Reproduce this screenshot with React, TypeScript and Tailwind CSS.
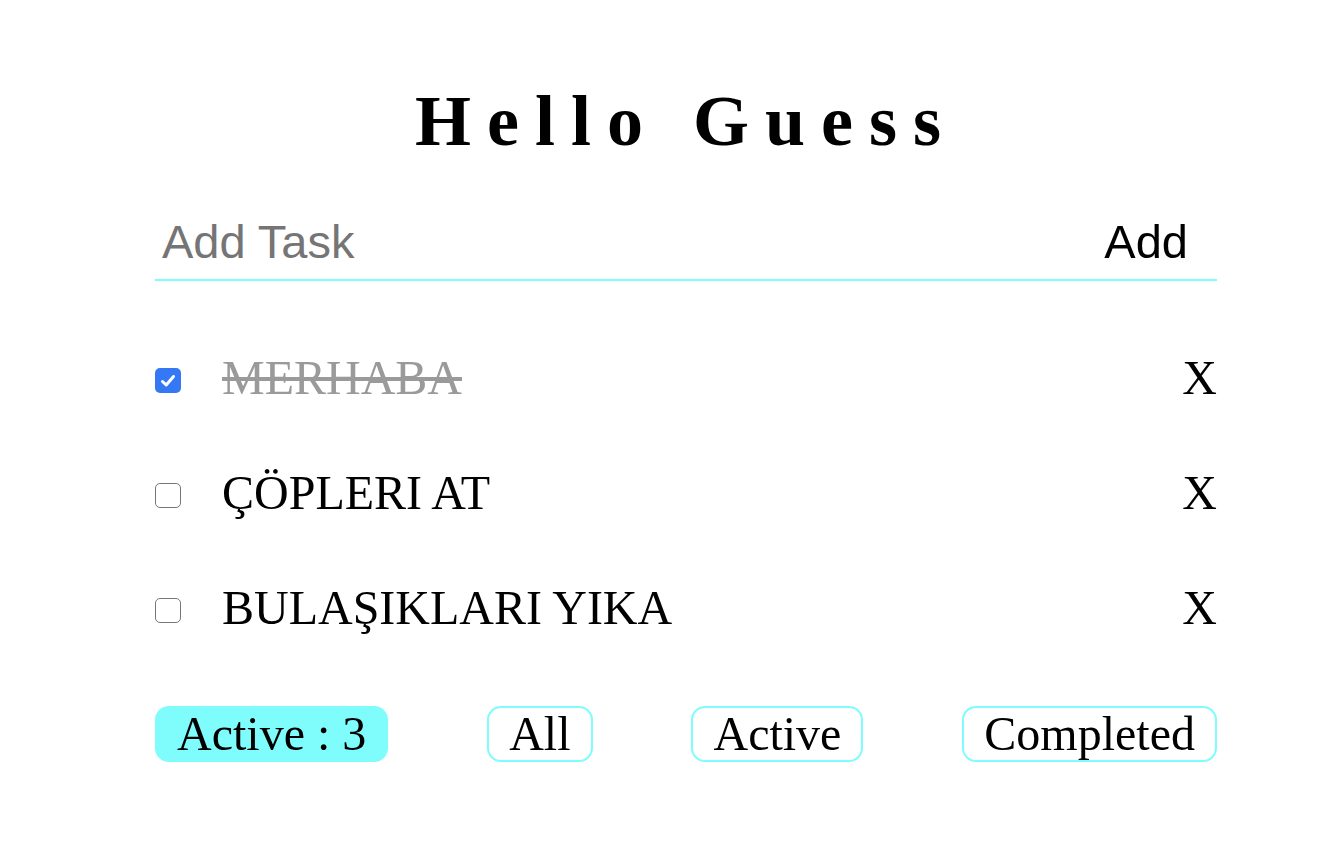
import React from "react";

const serif = { fontFamily: '"Liberation Serif", "Times New Roman", serif' };
const sans = { fontFamily: '"Liberation Sans", Arial, sans-serif' };

function Check({ checked }: { checked: boolean }) {
  if (checked) {
    return (
      <div className="flex h-[25px] w-[26px] items-center justify-center rounded-[5px] bg-[#3478f6]">
        <svg width="18" height="18" viewBox="0 0 18 18">
          <path d="M3.5 9.5 L7.2 13 L14.5 4.5" fill="none" stroke="white" strokeWidth="3" strokeLinecap="round" strokeLinejoin="round" />
        </svg>
      </div>
    );
  }
  return <div className="h-[25px] w-[26px] rounded-[5px] border-[1.5px] border-[#767676] bg-white" />;
}

const tasks = [
  { text: "MERHABA", done: true },
  { text: "ÇÖPLERI AT", done: false },
  { text: "BULAŞIKLARI YIKA", done: false },
];

export default function App() {
  return (
    <div className="min-h-[866px] w-full bg-white">
      <div className="ml-[155px] w-[1062px] pt-[85px]">
        <h1
          className="text-center text-[72px] font-bold leading-[72px] tracking-[16px] text-black"
          style={serif}
        >
          Hello Guess
        </h1>
        <div className="mt-[58px] flex items-center border-b-2 border-[#7ffcfc] pb-[10px] pl-[7px] pr-[29px]">
          <input
            className="h-[54px] flex-1 bg-transparent text-[47px] leading-[54px] text-black outline-none placeholder:text-[#757575]"
            style={sans}
            placeholder="Add Task"
            autoFocus
          />
          <button className="text-[47px] leading-[54px] text-black" style={sans}>
            Add
          </button>
        </div>
        <div className="mt-[42px] flex flex-col">
          {tasks.map((t) => (
            <div key={t.text} className="flex h-[115px] items-center">
              <Check checked={t.done} />
              <span
                className={
                  "ml-[41px] flex-1 pb-[7px] text-[48px] leading-[53px] " +
                  (t.done ? "text-[#9a9a9a] line-through" : "text-black")
                }
                style={serif}
              >
                {t.text}
              </span>
              <span className="pb-[7px] text-[48px] leading-[53px] text-black" style={serif}>
                X
              </span>
            </div>
          ))}
        </div>
        <div className="mt-[38px] flex items-center justify-between text-[48px] leading-[52px] text-black" style={serif}>
          <div className="rounded-[14px] border-2 border-[#7ffcfc] bg-[#7ffcfc] px-[20px]">Active : 3</div>
          <button className="rounded-[14px] border-2 border-[#7ffcfc] bg-white px-[20px]">All</button>
          <button className="rounded-[14px] border-2 border-[#7ffcfc] bg-white px-[20px]">Active</button>
          <button className="rounded-[14px] border-2 border-[#7ffcfc] bg-white px-[20px]">Completed</button>
        </div>
      </div>
    </div>
  );
}
